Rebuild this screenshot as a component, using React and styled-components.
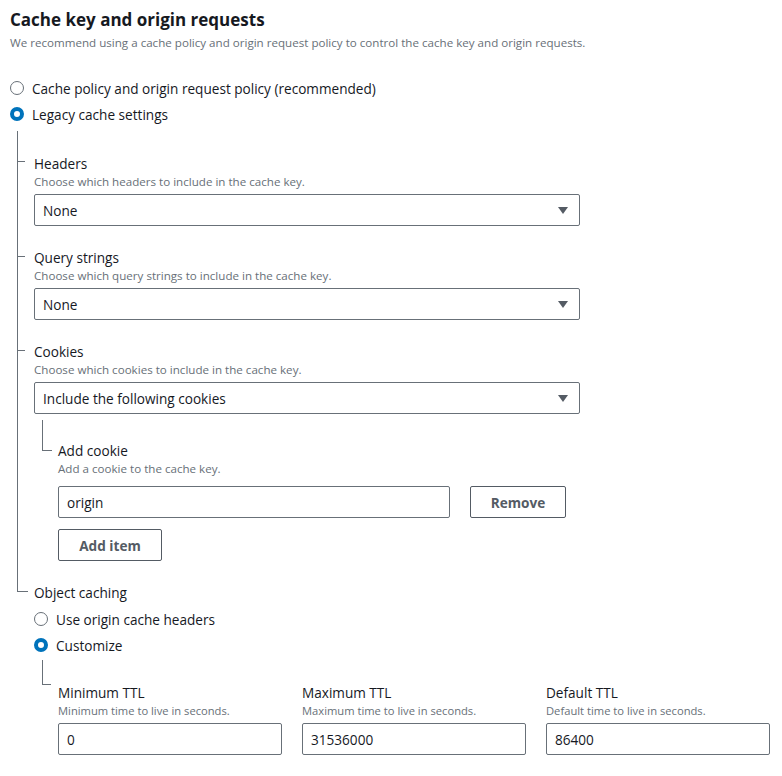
import React from "react";
import styled, { createGlobalStyle } from "styled-components";

const Global = createGlobalStyle`
  html, body { margin: 0; padding: 0; background: #fff; }
  body { font-family: "Open Sans", "Noto Sans", sans-serif; color: #16191f; }
  * { box-sizing: border-box; }
`;

const Page = styled.div`
  width: 782px;
  padding: 8px 12px 20px 10px;
`;

const Heading = styled.h2`
  margin: 0;
  font-size: 17px;
  line-height: 24px;
  font-weight: 700;
  color: #16191f;
`;

const Description = styled.div`
  font-size: ${(p) => (p.$small ? "11.2px" : "11.6px")};
  line-height: 16px;
  color: #687078;
  margin-top: ${(p) => p.$mt || 0}px;
`;

const RadioGroup = styled.div`
  display: flex;
  flex-direction: column;
  gap: 6px;
  margin-top: ${(p) => p.$mt || 0}px;
`;

const RadioRow = styled.label`
  display: flex;
  align-items: center;
  gap: 8px;
  height: 20px;
  font-size: 13.6px;
  color: #16191f;
`;

const RadioDot = styled.span`
  width: 14px;
  height: 14px;
  border-radius: 50%;
  flex: none;
  border: ${(p) => (p.$checked ? "4px solid #0073bb" : "1.5px solid #687078")};
  background: #fff;
`;

const Tree = styled.div`
  margin-left: ${(p) => p.$indent}px;
  padding-left: ${(p) => p.$pad}px;
  display: flex;
  flex-direction: column;
  margin-top: ${(p) => p.$mt || 0}px;
`;

const TreeItem = styled.div`
  position: relative;
  padding-top: ${(p) => p.$pt}px;
  &::before {
    content: "";
    position: absolute;
    left: -${(p) => p.$pad}px;
    top: 0;
    ${(p) =>
      p.$last
        ? `height: ${p.$tick + 1}px; width: ${p.$tickW}px; border-left: 1px solid #687078; border-bottom: 1px solid #687078;`
        : `bottom: 0; width: 0; border-left: 1px solid #687078;`}
  }
  &::after {
    content: "";
    position: absolute;
    left: -${(p) => p.$pad}px;
    top: ${(p) => p.$tick}px;
    width: ${(p) => p.$tickW}px;
    height: 1px;
    background: ${(p) => (p.$last ? "transparent" : "#687078")};
  }
`;

const Nested = styled.div`
  position: relative;
  margin-left: 8px;
  padding-left: 16px;
  padding-top: ${(p) => p.$pt}px;
  &::before {
    content: "";
    position: absolute;
    left: 0;
    top: ${(p) => p.$lineTop}px;
    height: ${(p) => p.$lineH}px;
    width: ${(p) => p.$lineW}px;
    border-left: 1px solid #687078;
    border-bottom: 1px solid #687078;
  }
`;

const Label = styled.div`
  font-size: 13.6px;
  line-height: 20px;
  color: #16191f;
`;

const Select = styled.div`
  margin-top: 4px;
  width: 546px;
  height: 32px;
  border: 1px solid #687078;
  border-radius: 2px;
  display: flex;
  align-items: center;
  justify-content: space-between;
  padding: 0 11px 0 8px;
  font-size: 13.6px;
  color: #16191f;
`;

const Caret = styled.span`
  width: 0;
  height: 0;
  border-left: 5px solid transparent;
  border-right: 5px solid transparent;
  border-top: 7px solid #545b64;
`;

const Input = styled.div`
  width: ${(p) => p.$w}px;
  height: 32px;
  border: 1px solid #687078;
  border-radius: 2px;
  display: flex;
  align-items: center;
  padding: 0 8px;
  font-size: 13.6px;
  color: #16191f;
  margin-top: ${(p) => p.$mt || 0}px;
`;

const InputRow = styled.div`
  display: flex;
  gap: 20px;
  margin-top: 9px;
`;

const Button = styled.button`
  width: ${(p) => p.$w}px;
  height: 32px;
  border: 1px solid #545b64;
  border-radius: 2px;
  background: #fff;
  font-family: inherit;
  font-size: 13.6px;
  font-weight: 700;
  color: #545b64;
  padding: 0;
  margin-top: ${(p) => p.$mt || 0}px;
`;

const TtlGrid = styled.div`
  display: grid;
  grid-template-columns: repeat(3, 224px);
  column-gap: 20px;
`;

const Field = styled.div`
  display: flex;
  flex-direction: column;
`;

function Radio({ checked, children }) {
  return (
    <RadioRow>
      <RadioDot $checked={checked} />
      {children}
    </RadioRow>
  );
}

function SelectField({ label, desc, value, pt, tick }) {
  return (
    <TreeItem $pt={pt} $pad={17} $tick={tick} $tickW={8}>
      <Label>{label}</Label>
      <Description>{desc}</Description>
      <Select>
        {value}
        <Caret />
      </Select>
    </TreeItem>
  );
}

export default function App() {
  return (
    <>
      <Global />
      <Page>
        <Heading>Cache key and origin requests</Heading>
        <Description $mt={3}>
          We recommend using a cache policy and origin request policy to control the cache key and origin requests.
        </Description>
        <RadioGroup $mt={27}>
          <Radio>Cache policy and origin request policy (recommended)</Radio>
          <Radio checked>Legacy cache settings</Radio>
        </RadioGroup>
        <Tree $indent={7} $pad={17} $mt={7}>
          <SelectField
            pt={23}
            tick={30}
            label="Headers"
            desc="Choose which headers to include in the cache key."
            value="None"
          />
          <SelectField
            pt={22}
            tick={30}
            label="Query strings"
            desc="Choose which query strings to include in the cache key."
            value="None"
          />
          <TreeItem $pt={22} $pad={17} $tick={30} $tickW={8}>
            <Label>Cookies</Label>
            <Description>Choose which cookies to include in the cache key.</Description>
            <Select>
              Include the following cookies
              <Caret />
            </Select>
            <Nested $pt={27} $lineTop={6} $lineH={30} $lineW={9}>
              <Label>Add cookie</Label>
              <Description>Add a cookie to the cache key.</Description>
              <InputRow>
                <Input $w={392}>origin</Input>
                <Button $w={96}>Remove</Button>
              </InputRow>
              <Button $w={104} $mt={11}>Add item</Button>
            </Nested>
          </TreeItem>
          <TreeItem $pt={22} $pad={17} $tick={29} $tickW={10} $last>
            <Label>Object caching</Label>
            <RadioGroup $mt={6}>
              <Radio>Use origin cache headers</Radio>
              <Radio checked>Customize</Radio>
            </RadioGroup>
            <Nested $pt={28} $lineTop={5} $lineH={24} $lineW={8}>
              <TtlGrid>
                <Field>
                  <Label>Minimum TTL</Label>
                  <Description $small>Minimum time to live in seconds.</Description>
                  <Input $w={224} $mt={4}>0</Input>
                </Field>
                <Field>
                  <Label>Maximum TTL</Label>
                  <Description $small>Maximum time to live in seconds.</Description>
                  <Input $w={224} $mt={4}>31536000</Input>
                </Field>
                <Field>
                  <Label>Default TTL</Label>
                  <Description $small>Default time to live in seconds.</Description>
                  <Input $w={224} $mt={4}>86400</Input>
                </Field>
              </TtlGrid>
            </Nested>
          </TreeItem>
        </Tree>
      </Page>
    </>
  );
}
